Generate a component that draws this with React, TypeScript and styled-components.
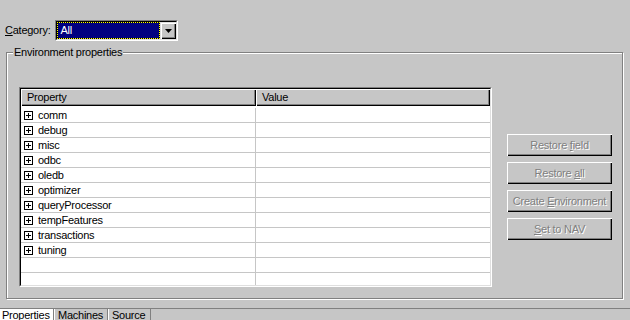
import React from 'react';
import styled, { createGlobalStyle } from 'styled-components';

const GlobalStyle = createGlobalStyle`
  html, body { margin: 0; padding: 0; background: #c6c6c6; }
  body {
    font-family: "Liberation Sans", Arial, sans-serif;
    font-size: 11px;
    letter-spacing: -0.25px;
    color: #000;
  }
  * { box-sizing: border-box; }
`;

const Window = styled.div`
  width: 630px;
  height: 320px;
  overflow: hidden;
  display: flex;
  flex-direction: column;
  background: #c6c6c6;
`;

const TopRow = styled.div`
  flex: none;
  display: flex;
  align-items: center;
  gap: 5px;
  padding: 20px 0 0 5px;
  height: 41px;
`;

const Label = styled.span`
  line-height: 13px;
`;

const Combo = styled.div`
  width: 123px;
  height: 21px;
  border: 1px solid;
  border-color: #808080 #fff #fff #808080;
  display: flex;
`;

const ComboInner = styled.div`
  flex: 1;
  display: flex;
  border: 1px solid;
  border-color: #000 #dfdfdf #dfdfdf #000;
  background: #000;
`;

const ComboField = styled.div`
  flex: 1;
  background: #000080;
  background-clip: padding-box;
  border: 1px dotted #ffff00;
  color: #fff;
  padding-left: 2px;
  line-height: 15px;
`;

const ComboButton = styled.div`
  width: 16px;
  flex: none;
  background: #c6c6c6;
  display: flex;
  align-items: center;
  justify-content: center;
  box-shadow: inset 1px 1px 0 #dfdfdf, inset 2px 2px 0 #fff, inset -1px -1px 0 #000,
    inset -2px -2px 0 #808080;
`;

const Group = styled.div`
  flex: none;
  position: relative;
  margin: 11px 0 0 6px;
  width: 617px;
  height: 247px;
  border: 1px solid #808080;
  box-shadow: inset 1px 1px 0 #fff, 1px 1px 0 #fff;
  display: flex;
  align-items: flex-start;
  padding: 34px 0 0 12px;
`;

const Legend = styled.span`
  position: absolute;
  top: -7px;
  left: 6px;
  padding: 0 1px;
  line-height: 13px;
  background: #c6c6c6;
`;

const TableOuter = styled.div`
  flex: none;
  width: 473px;
  height: 200px;
  border: 1px solid;
  border-color: #808080 #fff #fff #808080;
`;

const TableInner = styled.div`
  height: 100%;
  border: 1px solid;
  border-color: #000 #dfdfdf #dfdfdf #000;
  background: #fff;
  overflow: hidden;
  display: flex;
  flex-direction: column;
`;

const HeaderRow = styled.div`
  flex: none;
  display: grid;
  grid-template-columns: 235px 1fr;
  height: 17px;
`;

const HeaderCell = styled.div`
  background: #c6c6c6;
  padding-left: 6px;
  line-height: 16px;
  box-shadow: inset 1px 1px 0 #fff, inset -1px -1px 0 #000, inset -2px -2px 0 #808080;
`;

const Body = styled.div`
  flex: 1;
  padding-top: 2px;
  overflow: hidden;
`;

const Row = styled.div`
  display: grid;
  grid-template-columns: 235px 1fr;
  height: 15px;
  border-bottom: 1px solid #c6c6c6;
`;

const PropCell = styled.div`
  display: flex;
  align-items: center;
  gap: 5px;
  padding: 1px 0 0 3px;
  border-right: 1px solid #c6c6c6;
  line-height: 13px;
`;

const ValueCell = styled.div``;

const ButtonColumn = styled.div`
  flex: none;
  display: flex;
  flex-direction: column;
  gap: 6px;
  margin: 47px 0 0 15px;
`;

const Button = styled.button`
  width: 105px;
  height: 22px;
  padding: 0;
  border: none;
  background: #c6c6c6;
  font: inherit;
  letter-spacing: inherit;
  color: #808080;
  text-shadow: 1px 1px 0 #fff;
  box-shadow: inset 1px 1px 0 #fff, inset -1px -1px 0 #000, inset -2px -2px 0 #808080;
`;

const TabStrip = styled.div`
  flex: 1;
  margin-top: 9px;
  border-top: 1px solid #808080;
  display: flex;
`;

const Tab = styled.div<{ $active?: boolean; $width: number }>`
  width: ${(p) => p.$width}px;
  padding: 0 0 0 ${(p) => (p.$active ? 2 : 3)}px;
  line-height: 13px;
  background: ${(p) => (p.$active ? '#fff' : '#c6c6c6')};
  border-left: ${(p) => (p.$active ? 'none' : '1px solid #fff')};
  border-right: 1px solid #808080;
`;

const PlusBox = () => (
  <svg width="9" height="9" viewBox="0 0 9 9" style={{ flex: 'none' }}>
    <rect x="0.5" y="0.5" width="8" height="8" fill="#fff" stroke="#000" />
    <path d="M2 4.5H7M4.5 2V7" stroke="#000" />
  </svg>
);

const groups = [
  'comm',
  'debug',
  'misc',
  'odbc',
  'oledb',
  'optimizer',
  'queryProcessor',
  'tempFeatures',
  'transactions',
  'tuning',
];

export default function App() {
  return (
    <>
      <GlobalStyle />
      <Window>
        <TopRow>
          <Label>
            <u>C</u>ategory:
          </Label>
          <Combo>
            <ComboInner>
              <ComboField>All</ComboField>
              <ComboButton>
                <svg width="7" height="4" viewBox="0 0 7 4">
                  <path d="M0 0H7L3.5 4Z" fill="#000" />
                </svg>
              </ComboButton>
            </ComboInner>
          </Combo>
        </TopRow>
        <Group>
          <Legend>Environment properties</Legend>
          <TableOuter>
            <TableInner>
              <HeaderRow>
                <HeaderCell>Property</HeaderCell>
                <HeaderCell>Value</HeaderCell>
              </HeaderRow>
              <Body>
                {groups.map((g) => (
                  <Row key={g}>
                    <PropCell>
                      <PlusBox />
                      {g}
                    </PropCell>
                    <ValueCell />
                  </Row>
                ))}
                <Row>
                  <PropCell />
                  <ValueCell />
                </Row>
                <Row>
                  <PropCell />
                  <ValueCell />
                </Row>
              </Body>
            </TableInner>
          </TableOuter>
          <ButtonColumn>
            <Button disabled>
              Restore <u>f</u>ield
            </Button>
            <Button disabled>
              Restore <u>a</u>ll
            </Button>
            <Button disabled>
              Create <u>E</u>nvironment
            </Button>
            <Button disabled>
              <u>S</u>et to NAV
            </Button>
          </ButtonColumn>
        </Group>
        <TabStrip>
          <Tab $active $width={54}>Properties</Tab>
          <Tab $width={54}>Machines</Tab>
          <Tab $width={43}>Source</Tab>
        </TabStrip>
      </Window>
    </>
  );
}
